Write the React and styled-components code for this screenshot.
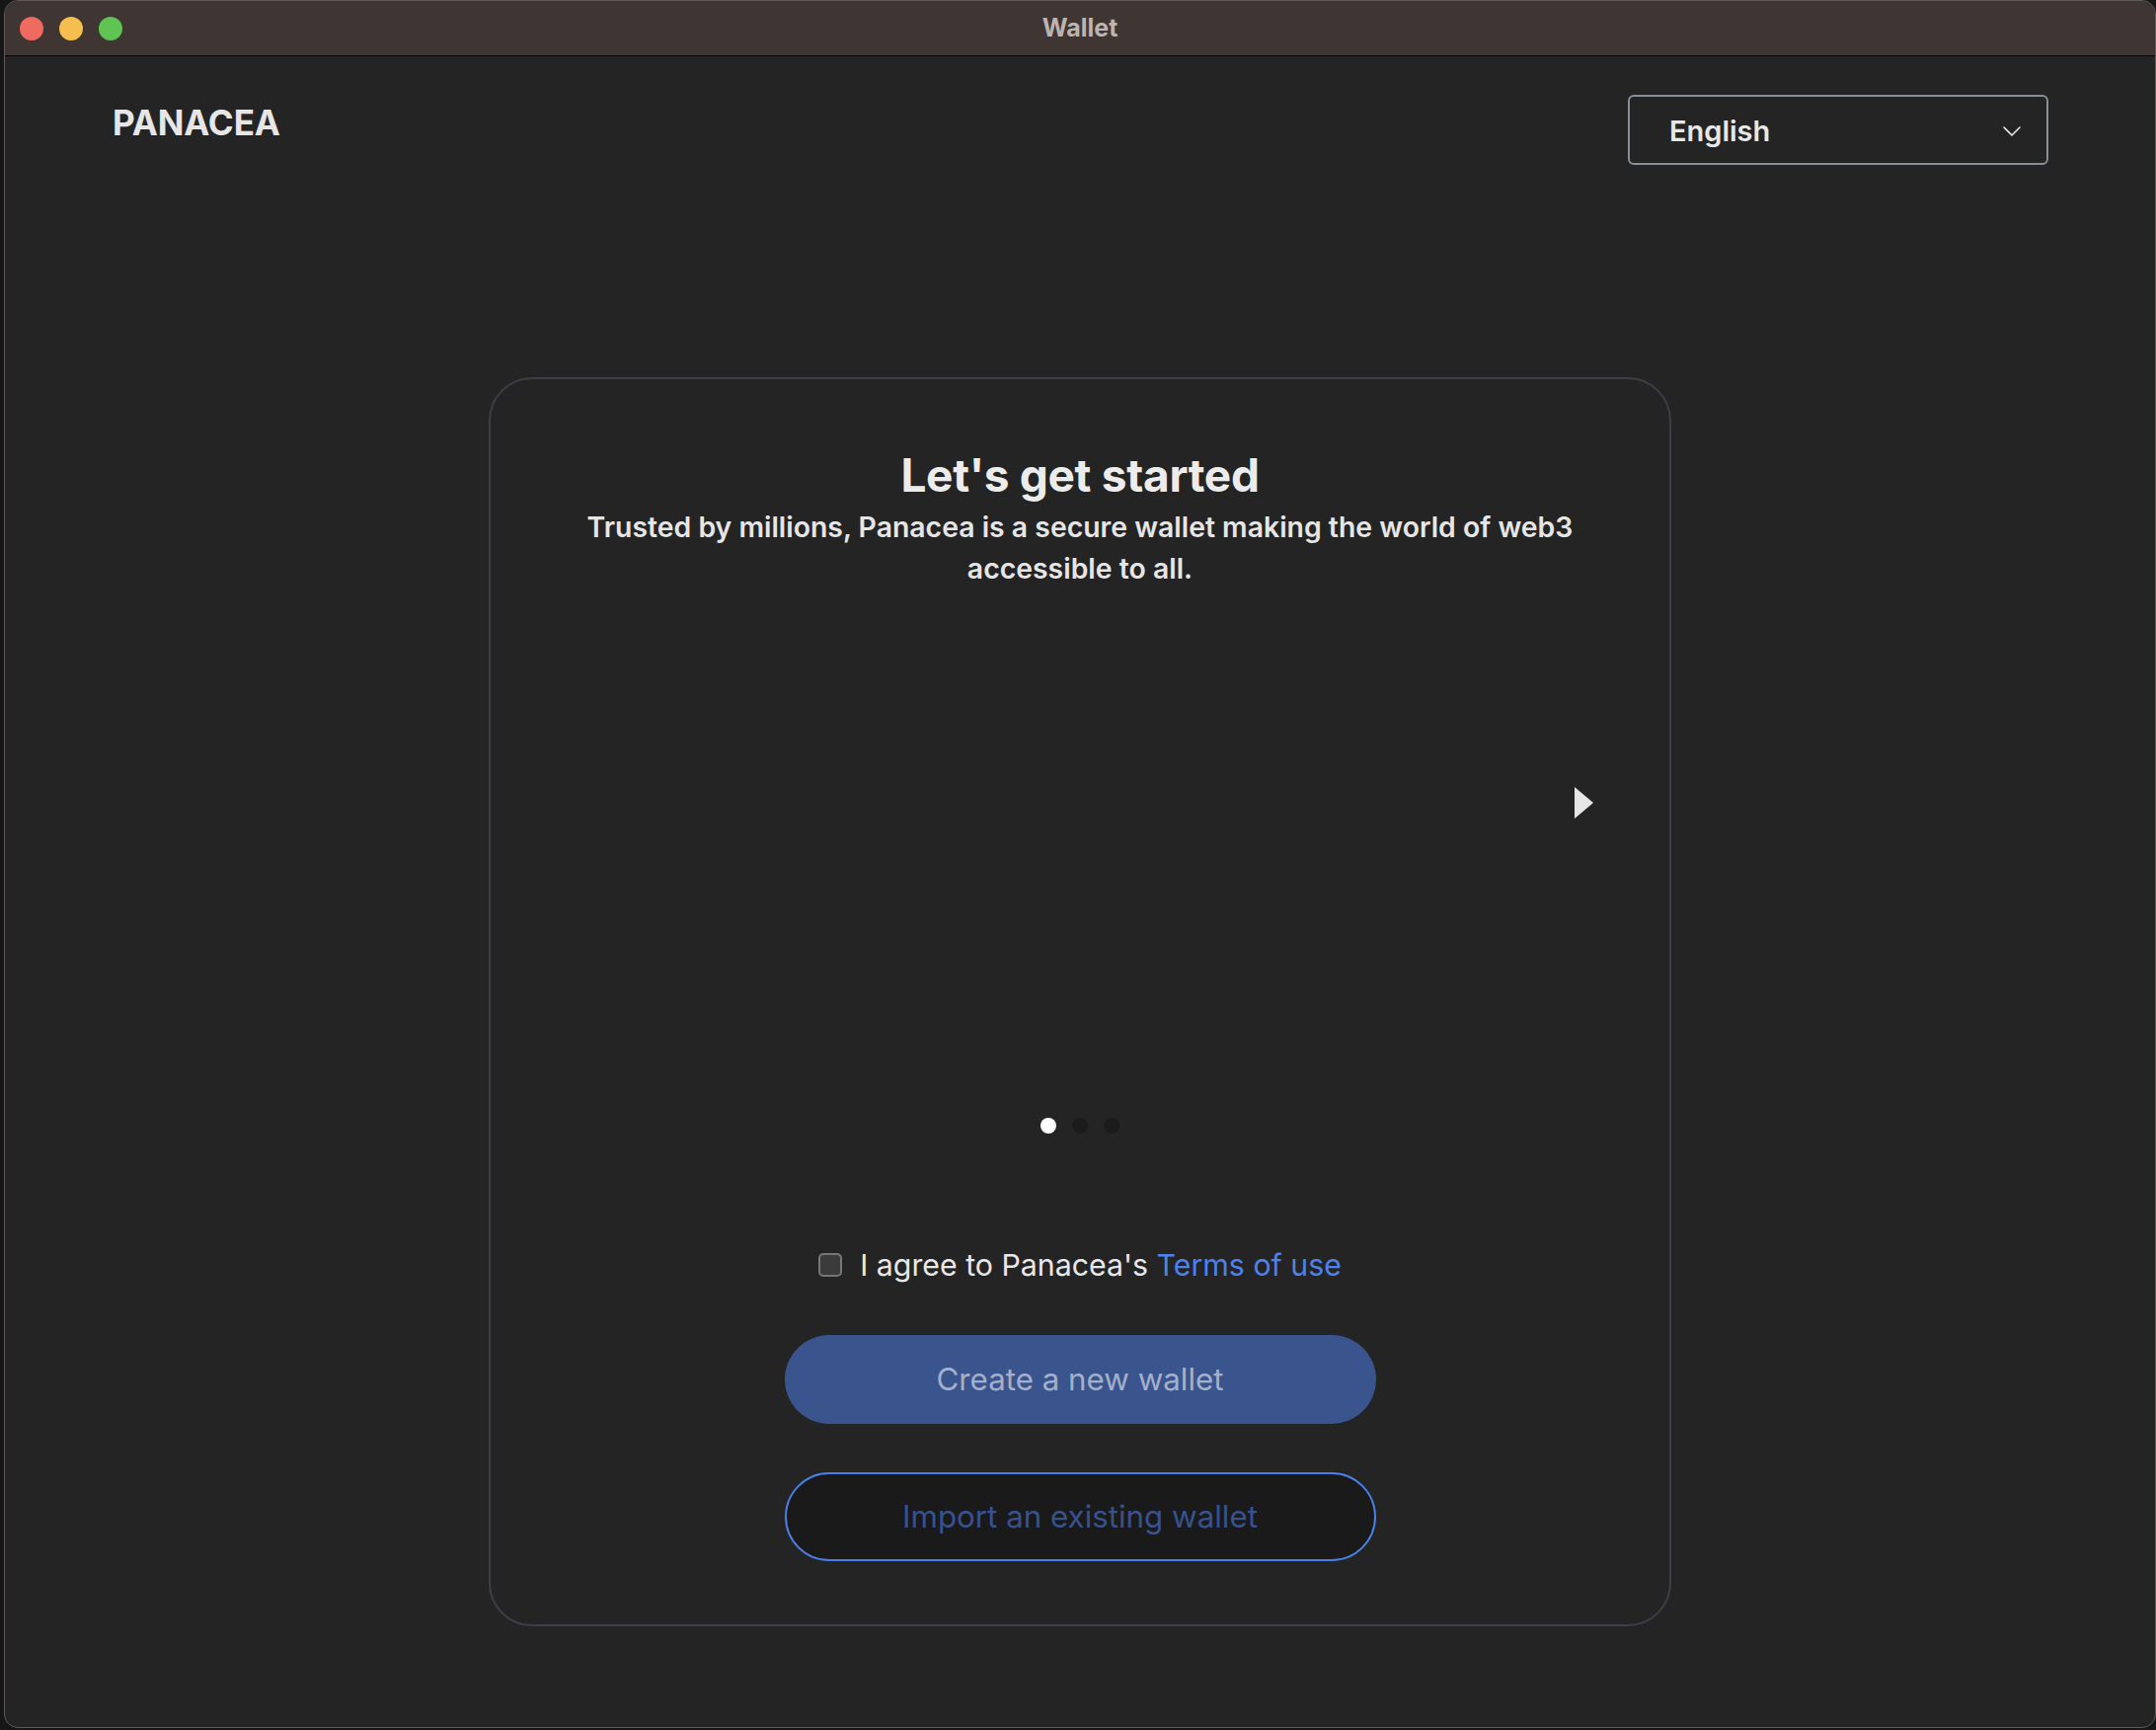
import React, { useState } from 'react';
import styled, { createGlobalStyle } from 'styled-components';

const GlobalStyle = createGlobalStyle`
	html, body {
		margin: 0;
		padding: 0;
		background: #161616;
	}
	body {
		font-family: Inter, "Noto Sans", "Liberation Sans", sans-serif;
		-webkit-font-smoothing: antialiased;
	}
	* {
		box-sizing: border-box;
	}
`;

const Desktop = styled.div`
	width: 2184px;
	height: 1752px;
	padding-left: 4px;
	overflow: hidden;
`;

const Window = styled.div`
	display: flex;
	flex-direction: column;
	width: 2180px;
	height: 1750px;
	border: 1px solid #5e5958;
	border-radius: 14px;
	overflow: hidden;
	background: #242424;
`;

const TitleBar = styled.div`
	display: grid;
	grid-template-columns: 200px 1fr 200px;
	align-items: center;
	height: 56px;
	flex-shrink: 0;
	padding: 0 15px;
	background: #3f3634;
	border-bottom: 1px solid #050505;
`;

const Lights = styled.div`
	display: flex;
	gap: 16px;
`;

const Light = styled.span`
	width: 24px;
	height: 24px;
	border-radius: 50%;
	background: ${({ color }) => color};
`;

const WindowTitle = styled.div`
	text-align: center;
	color: #bdb4b2;
	font-size: 25px;
	font-weight: 700;
	margin-top: -2px;
`;

const Main = styled.main`
	flex: 1;
	display: flex;
	flex-direction: column;
`;

const Header = styled.header`
	display: flex;
	justify-content: space-between;
	align-items: flex-start;
	padding: 39px 108px 0 109px;
`;

const Logo = styled.div`
	margin-top: 4px;
	color: #e6e6e6;
	font-size: 35px;
	font-weight: 700;
	line-height: 48px;
	letter-spacing: -0.1px;
`;

const Select = styled.button`
	display: flex;
	align-items: center;
	justify-content: space-between;
	width: 426px;
	height: 71px;
	padding: 2px 26px 0 40px;
	background: transparent;
	border: 2px solid #8a8e96;
	border-radius: 6px;
	color: #e8e8e8;
	font-family: inherit;
	font-size: 29px;
	font-weight: 600;
	cursor: pointer;
`;

const Card = styled.section`
	display: flex;
	flex-direction: column;
	align-items: center;
	width: 1198px;
	height: 1265px;
	margin: 215px auto 0;
	padding: 69px 0 0;
	border: 2px solid #3c3f44;
	border-radius: 44px;
`;

const Title = styled.h1`
	margin: 0;
	color: #ececec;
	font-size: 46px;
	font-weight: 700;
	line-height: 56px;
	letter-spacing: -0.3px;
`;

const Subtitle = styled.p`
	max-width: 1060px;
	margin: 4px 0 0;
	color: #e6e6e6;
	font-size: 28.4px;
	font-weight: 600;
	line-height: 42px;
	text-align: center;
`;

const Carousel = styled.div`
	position: relative;
	align-self: stretch;
	height: 535px;
`;

const NextArrow = styled.button`
	position: absolute;
	top: 200px;
	right: 77px;
	width: 19px;
	height: 32px;
	padding: 0;
	border: 0;
	background: transparent;
	cursor: pointer;
	svg {
		display: block;
	}
`;

const Dots = styled.div`
	display: flex;
	gap: 16px;
`;

const Dot = styled.span`
	width: 16px;
	height: 16px;
	border-radius: 50%;
	background: ${({ active }) => (active ? '#ffffff' : '#1b1b1b')};
`;

const Agree = styled.label`
	display: flex;
	align-items: center;
	gap: 18px;
	margin-top: 113px;
	color: #e8e8e8;
	font-size: 30.3px;
	line-height: 40px;
	cursor: pointer;
`;

const Box = styled.span`
	width: 24px;
	height: 24px;
	border: 2px solid #777777;
	border-radius: 5px;
	background: #3b3b3b;
`;

const Link = styled.a`
	color: #4d82ec;
	text-decoration: none;
`;

const Actions = styled.div`
	display: flex;
	flex-direction: column;
	gap: 49px;
	margin-top: 51px;
`;

const PillButton = styled.button`
	width: 599px;
	height: 90px;
	border-radius: 45px;
	font-family: inherit;
	font-size: 31.3px;
	font-weight: 400;
	cursor: not-allowed;
	background: ${({ outline }) => (outline ? '#1a1a1a' : '#3a558e')};
	border: ${({ outline }) => (outline ? '2px solid #4a7fe6' : '0')};
	color: ${({ outline }) => (outline ? '#37528c' : '#a4b0cb')};
`;

const Chevron = () => (
	<svg width="18" height="10" viewBox="0 0 18 10" fill="none">
		<path d="M1 1l8 8 8-8" stroke="#e8e8e8" strokeWidth="1.6" strokeLinecap="round" strokeLinejoin="round" />
	</svg>
);

export default function App() {
	const [slide] = useState(0);

	return (
		<>
			<GlobalStyle />
			<Desktop>
				<Window>
					<TitleBar>
						<Lights>
							<Light color="#ef6a60" />
							<Light color="#f6be4f" />
							<Light color="#5fc454" />
						</Lights>
						<WindowTitle>Wallet</WindowTitle>
						<div />
					</TitleBar>
					<Main>
						<Header>
							<Logo>PANACEA</Logo>
							<Select>
								English
								<Chevron />
							</Select>
						</Header>
						<Card>
							<Title>Let's get started</Title>
							<Subtitle>
								Trusted by millions, Panacea is a secure wallet making the world of web3 accessible to all.
							</Subtitle>
							<Carousel>
								<NextArrow aria-label="Next">
									<svg width="19" height="32" viewBox="0 0 19 32">
										<path d="M0 0L19 16L0 32Z" fill="#e6e6e6" />
									</svg>
								</NextArrow>
							</Carousel>
							<Dots>
								{[0, 1, 2].map(i => (
									<Dot key={i} active={i === slide} />
								))}
							</Dots>
							<Agree>
								<Box />
								<span>
									I agree to Panacea's <Link href="#">Terms of use</Link>
								</span>
							</Agree>
							<Actions>
								<PillButton>Create a new wallet</PillButton>
								<PillButton outline>Import an existing wallet</PillButton>
							</Actions>
						</Card>
					</Main>
				</Window>
			</Desktop>
		</>
	);
}
